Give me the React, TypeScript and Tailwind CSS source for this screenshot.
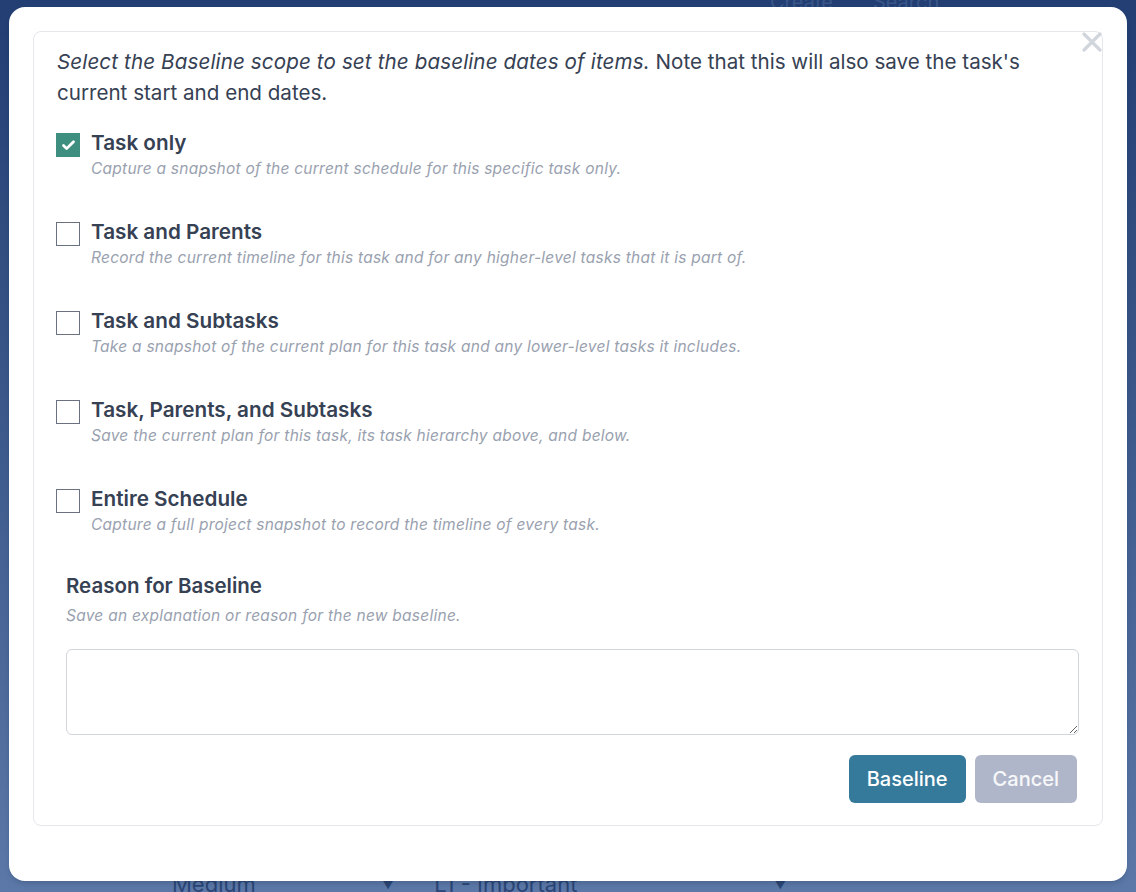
import { useState } from "react";
import { X, Check } from "lucide-react";

type ScopeOption = { id: string; label: string; description: string };

const scopeOptions: ScopeOption[] = [
  {
    id: "task",
    label: "Task only",
    description: "Capture a snapshot of the current schedule for this specific task only.",
  },
  {
    id: "parents",
    label: "Task and Parents",
    description:
      "Record the current timeline for this task and for any higher-level tasks that it is part of.",
  },
  {
    id: "subtasks",
    label: "Task and Subtasks",
    description: "Take a snapshot of the current plan for this task and any lower-level tasks it includes.",
  },
  {
    id: "all",
    label: "Task, Parents, and Subtasks",
    description: "Save the current plan for this task, its task hierarchy above, and below.",
  },
  {
    id: "schedule",
    label: "Entire Schedule",
    description: "Capture a full project snapshot to record the timeline of every task.",
  },
];

function App() {
  const [selected, setSelected] = useState<string[]>(["task"]);
  const [reason, setReason] = useState("");

  function toggle(id: string) {
    setSelected((prev) => (prev.includes(id) ? prev.filter((item) => item !== id) : [...prev, id]));
  }

  return (
    <div
      className="relative h-[892px] w-[1136px] overflow-hidden bg-gradient-to-b from-[#223e72] to-[#5b78a8]"
      style={{ fontFamily: "Inter, 'Noto Sans', sans-serif" }}
    >
      {/* faint app content behind the overlay */}
      <div className="absolute left-[770px] top-[-13px] flex gap-10 text-[20px] text-[#3a5688]">
        <span>Create</span>
        <span>Search</span>
      </div>
      <div className="absolute bottom-[-9px] left-[172px] flex items-center text-[22px] text-[#2a4676]">
        <span className="w-[210px]">Medium</span>
        <span className="mr-[40px] text-[12px]">▼</span>
        <span className="w-[340px]">L1 - Important</span>
        <span className="text-[12px]">▼</span>
      </div>

      <div className="absolute left-[9px] top-[7px] flex h-[874px] w-[1118px] flex-col rounded-2xl bg-white px-6 pt-6 shadow-md">
        <div className="relative flex flex-col rounded-lg border border-gray-200 px-[23px] pb-[22px] pt-[14px]">
          <button className="absolute right-[-6px] top-[-6px] text-gray-300">
            <X size={32} strokeWidth={2.4} />
          </button>

          <p className="pr-6 text-[20.6px] leading-[31px] text-gray-700">
            <em className="tracking-[0.12px]">Select the Baseline scope to set the baseline dates of items.</em> Note
            that this will also save the task's current start and end dates.
          </p>

          <div className="mt-[22px] flex flex-col gap-[40px]">
            {scopeOptions.map((option) => {
              const isChecked = selected.includes(option.id);
              return (
                <label key={option.id} className="flex cursor-pointer gap-[11px]">
                  <span
                    onClick={() => toggle(option.id)}
                    className={
                      isChecked
                        ? "-ml-px mt-[3px] flex h-6 w-6 shrink-0 items-center justify-center bg-[#3e8f80] text-white"
                        : "-ml-px mt-[3px] flex h-6 w-6 shrink-0 items-center justify-center border border-gray-500 bg-white"
                    }
                  >
                    {isChecked && <Check size={15} strokeWidth={4.5} />}
                  </span>
                  <span className="flex flex-col">
                    <span className="text-[20.7px] font-semibold leading-[26px] text-gray-700">{option.label}</span>
                    <span className="mt-[2px] text-[15.5px] italic leading-[21px] tracking-[0.25px] text-gray-400">
                      {option.description}
                    </span>
                  </span>
                </label>
              );
            })}
          </div>

          <div className="ml-[9px] mr-0 mt-[38px]">
            <h3 className="text-[20.5px] font-semibold leading-[26px] text-gray-700">Reason for Baseline</h3>
            <p className="mt-[6px] text-[15.5px] italic leading-[21px] tracking-[0.25px] text-gray-400">
              Save an explanation or reason for the new baseline.
            </p>
            <textarea
              value={reason}
              onChange={(event) => setReason(event.target.value)}
              className="mt-[23px] block h-[86px] w-full rounded-md border border-gray-300 px-3 py-2 text-base text-gray-700 outline-none"
            />
          </div>

          <div className="mt-[20px] flex justify-end gap-[9px] pr-[2px]">
            <button className="h-12 rounded-md bg-[#357a9a] px-[18px] text-[20px] font-medium text-white">
              Baseline
            </button>
            <button className="h-12 rounded-md bg-[#b0b6ca] px-[18px] text-[20px] font-medium text-white/90">
              Cancel
            </button>
          </div>
        </div>
      </div>
    </div>
  );
}

export default App;
